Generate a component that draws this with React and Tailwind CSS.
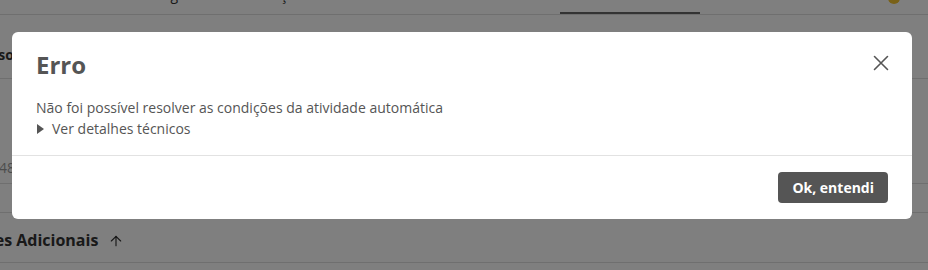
import React from 'react';
import { ArrowUp } from 'lucide-react';

// Error dialog over the process page
const App = () => {
    return (
        <div className="relative h-[270px] w-[928px] overflow-hidden bg-white font-['Open_Sans',sans-serif] text-[#333]">
            {/* page behind the overlay */}
            <div className="relative flex h-[15px] items-start border-b border-[#dedede]">
                <div className="-mt-[15px] flex gap-8 pl-[40px] text-[14px] leading-[20px] text-[#333]">
                    <span>Resumo</span>
                    <span>Dados gerais</span>
                    <span>Anotações</span>
                </div>
                <div className="absolute left-[560px] top-[12px] h-[2px] w-[140px] bg-[#666]" />
                <div className="absolute left-[888px] -top-[8px] h-[12px] w-[12px] rounded-full bg-[#f2c230]" />
            </div>
            <div className="h-[64px] border-b border-[#dedede] pt-[30px]">
                <div className="-ml-[48px] text-[14px] font-bold leading-[20px]">Processo</div>
            </div>
            <div className="flex h-[105px] items-end border-b border-[#dedede] pb-[5px]">
                <span className="-ml-[1px] text-[14px] leading-[20px] text-[#999]">48</span>
            </div>
            <div className="h-[29px] border-b border-[#dedede]" />
            <div className="flex h-[50px] items-start gap-[10px] border-b border-[#dedede] pt-[15px]">
                <span className="-ml-[88px] whitespace-nowrap text-[16px] font-bold leading-[24px] text-[#333]">Informações Adicionais</span>
                <ArrowUp className="mt-[5px] h-4 w-4 text-[#333]" strokeWidth={1.75} />
            </div>

            {/* overlay */}
            <div className="absolute inset-0 flex items-start bg-black/50 pl-[12px] pt-[32px]">
                <div className="w-[900px] rounded-md bg-white text-[#555]">
                    <div className="relative px-[24px] pb-[16px] pt-[18px]">
                        <h2 className="text-[24px] font-bold leading-[30px]">Erro</h2>
                        <button type="button" className="absolute right-[23px] top-[23px] text-[#555]">
                            <svg width="16" height="16" viewBox="0 0 16 16" fill="none" stroke="currentColor" strokeWidth="1.6" strokeLinecap="round">
                                <path d="M1.5 1.5 L14.5 14.5 M14.5 1.5 L1.5 14.5" />
                            </svg>
                        </button>
                        <p className="mt-[17px] text-[14px] leading-[21px]">
                            Não foi possível resolver as condições da atividade automática
                        </p>
                        <div className="flex items-center gap-[7px] text-[14px] leading-[21px]">
                            <svg width="8" height="10" viewBox="0 0 8 10" className="ml-[1px]">
                                <path d="M0 0 L7 5 L0 10 Z" fill="#555" />
                            </svg>
                            <span>Ver detalhes técnicos</span>
                        </div>
                    </div>
                    <div className="flex justify-end border-t border-[#e2e2e2] px-[24px] pb-[16px] pt-[16px]">
                        <button
                            type="button"
                            className="h-[31px] rounded-[4px] bg-[#555] px-[14px] text-[14px] font-bold text-white"
                        >
                            Ok, entendi
                        </button>
                    </div>
                </div>
            </div>
        </div>
    );
};

export default App;
